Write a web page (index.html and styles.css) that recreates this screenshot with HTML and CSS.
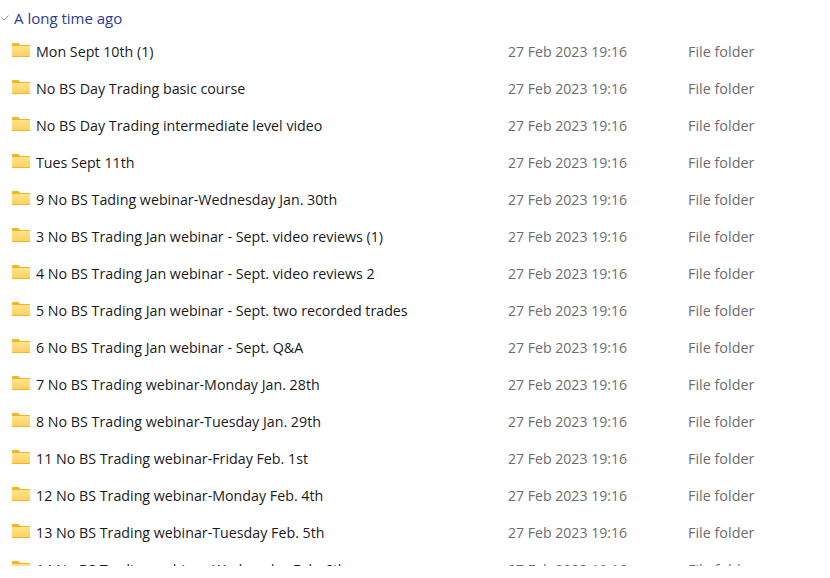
FILE: index.html
```html
<!DOCTYPE html>
<html lang="en">
<head>
    <meta charset="UTF-8">
    <title>A long time ago</title>
    <link rel="stylesheet" href="styles.css">
</head>
<body>
    <svg width="0" height="0" class="defs">
        <defs>
            <linearGradient id="folderFront" x1="0" y1="0" x2="0" y2="1">
                <stop offset="0" stop-color="#ffe48c"/>
                <stop offset="1" stop-color="#fdcf5c"/>
            </linearGradient>
            <symbol id="folder" viewBox="0 0 18 14">
                <path d="M0 1.2C0 .5.5 0 1.2 0h4.6c.5 0 .8.2 1.1.5L8.2 2H18v10H0z" fill="#f5b31c"/>
                <rect y="3" width="18" height="11" rx=".6" fill="url(#folderFront)"/>
                <rect y="13" width="18" height="1" fill="#f2b632"/>
            </symbol>
        </defs>
    </svg>

    <div class="view">
        <div class="group-header">
            <svg class="chevron" width="8" height="6" viewBox="0 0 8 6"><path d="M.5 2.5L3 5 7.5 .5" fill="none" stroke="#8a8a8a" stroke-width="1"/></svg>
            <span>A long time ago</span>
        </div>
        <div class="rows">
            <div class="row"><svg class="icon"><use href="#folder"/></svg><span class="name">Mon Sept 10th (1)</span><span class="date">27 Feb 2023 19:16</span><span class="type">File folder</span></div>
            <div class="row"><svg class="icon"><use href="#folder"/></svg><span class="name">No BS Day Trading basic course</span><span class="date">27 Feb 2023 19:16</span><span class="type">File folder</span></div>
            <div class="row"><svg class="icon"><use href="#folder"/></svg><span class="name">No BS Day Trading intermediate level video</span><span class="date">27 Feb 2023 19:16</span><span class="type">File folder</span></div>
            <div class="row"><svg class="icon"><use href="#folder"/></svg><span class="name">Tues Sept 11th</span><span class="date">27 Feb 2023 19:16</span><span class="type">File folder</span></div>
            <div class="row"><svg class="icon"><use href="#folder"/></svg><span class="name">9 No BS Tading webinar-Wednesday Jan. 30th</span><span class="date">27 Feb 2023 19:16</span><span class="type">File folder</span></div>
            <div class="row"><svg class="icon"><use href="#folder"/></svg><span class="name">3 No BS Trading Jan webinar - Sept. video reviews (1)</span><span class="date">27 Feb 2023 19:16</span><span class="type">File folder</span></div>
            <div class="row"><svg class="icon"><use href="#folder"/></svg><span class="name">4 No BS Trading Jan webinar - Sept. video reviews 2</span><span class="date">27 Feb 2023 19:16</span><span class="type">File folder</span></div>
            <div class="row"><svg class="icon"><use href="#folder"/></svg><span class="name">5 No BS Trading Jan webinar - Sept. two recorded trades</span><span class="date">27 Feb 2023 19:16</span><span class="type">File folder</span></div>
            <div class="row"><svg class="icon"><use href="#folder"/></svg><span class="name">6 No BS Trading Jan webinar - Sept. Q&amp;A</span><span class="date">27 Feb 2023 19:16</span><span class="type">File folder</span></div>
            <div class="row"><svg class="icon"><use href="#folder"/></svg><span class="name">7 No BS Trading webinar-Monday Jan. 28th</span><span class="date">27 Feb 2023 19:16</span><span class="type">File folder</span></div>
            <div class="row"><svg class="icon"><use href="#folder"/></svg><span class="name">8 No BS Trading webinar-Tuesday Jan. 29th</span><span class="date">27 Feb 2023 19:16</span><span class="type">File folder</span></div>
            <div class="row"><svg class="icon"><use href="#folder"/></svg><span class="name">11 No BS Trading webinar-Friday Feb. 1st</span><span class="date">27 Feb 2023 19:16</span><span class="type">File folder</span></div>
            <div class="row"><svg class="icon"><use href="#folder"/></svg><span class="name">12 No BS Trading webinar-Monday Feb. 4th</span><span class="date">27 Feb 2023 19:16</span><span class="type">File folder</span></div>
            <div class="row"><svg class="icon"><use href="#folder"/></svg><span class="name">13 No BS Trading webinar-Tuesday Feb. 5th</span><span class="date">27 Feb 2023 19:16</span><span class="type">File folder</span></div>
            <div class="row"><svg class="icon"><use href="#folder"/></svg><span class="name">14 No BS Trading webinar-Wednesday Feb. 6th</span><span class="date">27 Feb 2023 19:16</span><span class="type">File folder</span></div>
        </div>
    </div>
</body>
</html>
```

FILE: styles.css
```css
html, body {
    margin: 0;
    padding: 0;
    background: #fff;
}

body {
    font-family: "Open Sans", "Noto Sans", sans-serif;
    font-size: 14px;
    color: #1a1a1a;
    height: 578px;
    overflow: hidden;
}

.defs {
    display: block;
    height: 0;
}

.view {
    height: 566px;
    overflow: hidden;
}

.group-header {
    display: flex;
    align-items: center;
    height: 19px;
    padding: 8px 0 6px 0;
    font-size: 15px;
    color: #2b3a9b;
}

.chevron {
    margin-left: 1px;
    margin-right: 5px;
}

.row {
    display: flex;
    align-items: center;
    height: 37px;
}

.icon {
    width: 18px;
    height: 14px;
    margin: -3px 6px 0 12px;
    flex: none;
}

.name {
    width: 472px;
    flex: none;
    font-size: 14.25px;
    white-space: nowrap;
}

.date {
    width: 180px;
    flex: none;
    font-size: 14.1px;
    color: #6d6d6d;
}

.type {
    font-size: 14.4px;
    color: #6d6d6d;
}
```
